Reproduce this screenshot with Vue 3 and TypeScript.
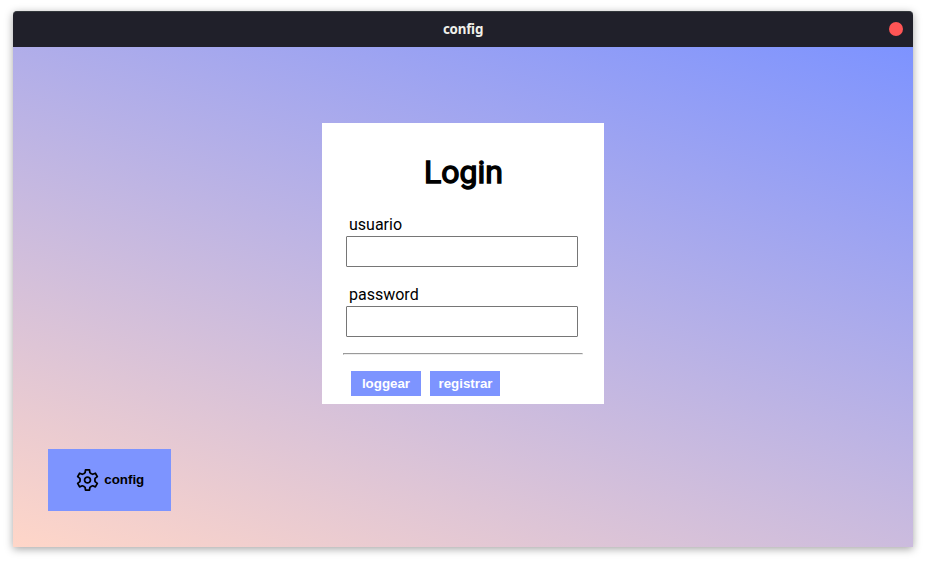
<script setup lang="ts">
import { ref } from 'vue'

interface Field {
  id: string
  type: string
}

const fields: Field[] = [
  { id: 'usuario', type: 'text' },
  { id: 'password', type: 'password' },
]
const values = ref<Record<string, string>>({ usuario: '', password: '' })

// Outline of a six-toothed gear centred on the origin.
const gearPath = Array.from({ length: 6 }, (_, tooth) => {
  const corners: [number, number][] = [[-3.3, -6.3], [-2.3, -7.1], [-1.9, -9.8], [1.9, -9.8], [2.3, -7.1], [3.3, -6.3]]
  const a = (tooth * Math.PI) / 3
  return corners
    .map(([x, y]) => {
      const px = x * Math.cos(a) - y * Math.sin(a)
      const py = x * Math.sin(a) + y * Math.cos(a)
      return `${px.toFixed(2)} ${py.toFixed(2)}`
    })
    .join(' L')
}).join(' L')
</script>

<template>
  <div class="window">
    <header class="titlebar">
      <span class="title">config</span>
      <button class="close" aria-label="close"></button>
    </header>
    <main class="content">
      <form class="card" @submit.prevent>
        <h1>Login</h1>
        <div v-for="f in fields" :key="f.id" class="field">
          <label :for="f.id">{{ f.id }}</label>
          <input :id="f.id" v-model="values[f.id]" :type="f.type" />
        </div>
        <hr />
        <div class="actions">
          <button class="action">loggear</button>
          <button class="action">registrar</button>
        </div>
      </form>
      <button class="config">
        <svg class="gear" viewBox="-12 -12.5 24 24">
          <path :d="`M${gearPath} Z`" />
          <circle r="2.8" />
        </svg>
        <span>config</span>
      </button>
    </main>
  </div>
</template>

<style>
body {
  background: #fff;
}
#app {
  display: flow-root;
}
</style>

<style scoped>
.window {
  width: 900px;
  height: 536px;
  margin: 11px 13px 15px;
  display: flex;
  flex-direction: column;
  border-radius: 4px 4px 0 0;
  box-shadow: 0 2px 9px rgba(0, 0, 0, 0.36);
}
.titlebar {
  box-sizing: border-box;
  height: 36px;
  padding: 0 10px 1px;
  display: grid;
  grid-template-columns: 14px 1fr 14px;
  align-items: center;
  background: #20202a;
  border-top: 1px solid #33383c;
  border-radius: 4px 4px 0 0;
}
.title {
  grid-column: 2;
  text-align: center;
  color: #f0f0ea;
  font: 700 13.333px/20px 'Noto Sans', sans-serif;
  letter-spacing: -0.2px;
}
button {
  border: 0;
  padding: 0;
}
.close {
  width: 14px;
  height: 14px;
  border-radius: 50%;
  background: #ff5555;
}
.content {
  box-sizing: border-box;
  height: 500px;
  padding: 76px 35px 36px;
  display: flex;
  flex-direction: column;
  justify-content: space-between;
  background: linear-gradient(20deg, #ffd6c8, #7d93ff);
}
.card {
  box-sizing: border-box;
  width: 282px;
  height: 281px;
  padding: 30px 21px 8px;
  align-self: center;
  background: #fff;
  color: #000;
  font-family: Roboto, sans-serif;
}
h1 {
  margin: 0 0 22px;
  padding-left: 1px;
  font-size: 32px;
  font-weight: 400;
  line-height: 38px;
  text-align: center;
  -webkit-text-stroke: 1.4px #000;
}
.field {
  height: 54px;
  margin-bottom: 16px;
  padding-left: 3px;
}
label {
  display: block;
  padding-left: 3px;
  font-size: 16px;
  line-height: 23px;
}
input {
  display: block;
  box-sizing: border-box;
  width: 232px;
  height: 31px;
  border: 1px solid #767676;
  border-radius: 1px;
  background: #fff;
}
hr {
  margin: 0 0 16px;
  border: 1px solid;
  border-color: #9a9a9a #eee #eee #9a9a9a;
}
.actions {
  display: flex;
  gap: 9px;
  padding-left: 8px;
}
.action,
.config {
  background: #7d94ff;
  font: bold 13.333px 'Liberation Sans', Arial, sans-serif;
}
.action {
  width: 70px;
  height: 25px;
  color: #fff;
}
.action:last-child {
  padding-left: 1px;
}
.config {
  width: 123px;
  height: 62px;
  padding-bottom: 1px;
  display: flex;
  align-items: center;
  justify-content: center;
  gap: 4.5px;
  color: #000;
}
.gear {
  width: 25px;
  height: 25px;
  fill: none;
  stroke: #000;
  stroke-width: 1.7;
  stroke-linejoin: round;
}
</style>
